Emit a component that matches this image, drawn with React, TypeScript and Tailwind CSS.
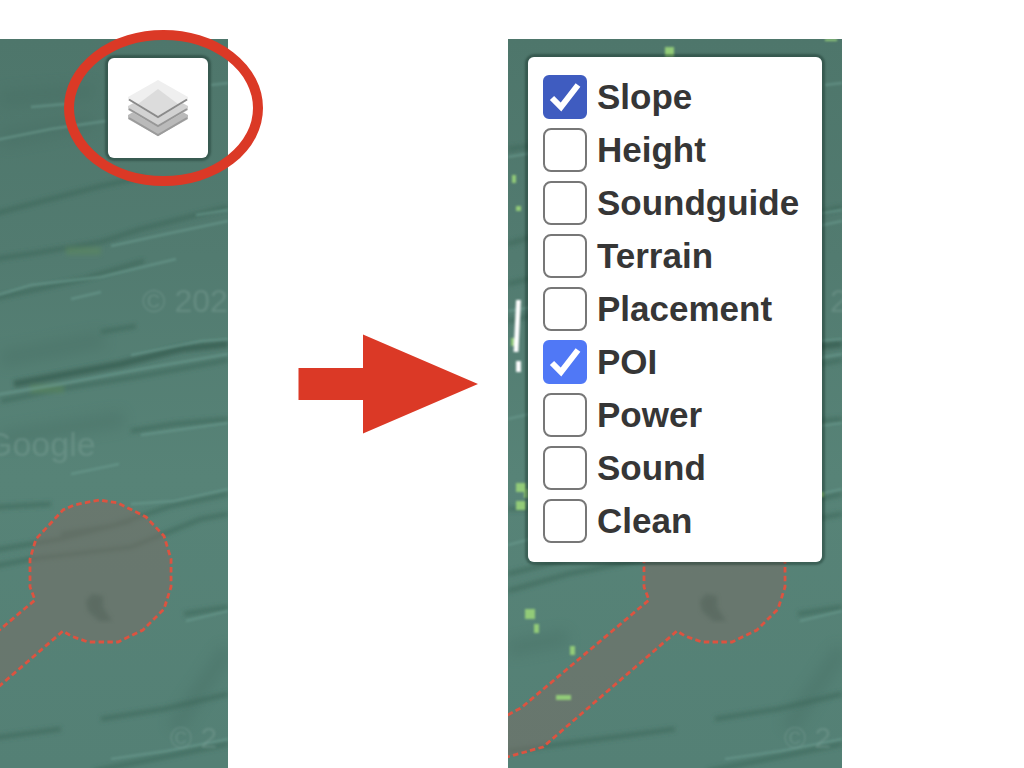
import React from 'react';

type Layer = { name: string; checked: boolean; fill: string };

const layers: Layer[] = [
  { name: 'Slope', checked: true, fill: 'checked:bg-[#3f5cc0] checked:border-[#3f5cc0]' },
  { name: 'Height', checked: false, fill: 'checked:bg-[#5078f6] checked:border-[#5078f6]' },
  { name: 'Soundguide', checked: false, fill: 'checked:bg-[#5078f6] checked:border-[#5078f6]' },
  { name: 'Terrain', checked: false, fill: 'checked:bg-[#5078f6] checked:border-[#5078f6]' },
  { name: 'Placement', checked: false, fill: 'checked:bg-[#5078f6] checked:border-[#5078f6]' },
  { name: 'POI', checked: true, fill: 'checked:bg-[#5078f6] checked:border-[#5078f6]' },
  { name: 'Power', checked: false, fill: 'checked:bg-[#5078f6] checked:border-[#5078f6]' },
  { name: 'Sound', checked: false, fill: 'checked:bg-[#5078f6] checked:border-[#5078f6]' },
  { name: 'Clean', checked: false, fill: 'checked:bg-[#5078f6] checked:border-[#5078f6]' },
];

const darkFurrows = [
  'M0 205 L107 173 L207 147 L250 138',
  'M0 245 L107 219 L142 214 L207 203 L247 190 L334 168',
  'M0 282 L107 258 L190 240 L250 222',
  'M207 293 L242 287',
  'M107 362 L167 350 L247 337 L334 321',
  'M0 110 L30 106',
  'M0 470 L107 468 L157 465',
  'M237 392 L280 385 L334 380',
  'M167 495 L217 487 L277 467 L334 455',
  'M0 535 L40 525 L107 510 L167 500 L237 482',
  'M0 552 L60 535 L137 520 L237 508 L307 480 L334 475',
  'M207 680 L270 670 L334 655',
  'M0 712 L107 698 L167 690',
  'M200 732 L280 716 L334 705',
  'M290 575 L334 568',
];

const broadShades = [
  'M107 60 L200 52',
  'M107 100 L200 82',
  'M107 320 L210 300',
  'M280 690 L334 610',
  'M0 610 L60 598',
  'M107 400 L230 380',
];

const lightFurrows = [
  'M137 68 L172 65',
  'M0 118 L107 100 L157 90 L212 82',
  'M317 46 L334 44',
  'M217 207 L272 195 L334 182',
  'M302 176 L334 171',
  'M0 272 L107 255 L137 246 L207 238 L282 220',
  'M177 260 L207 253',
  'M237 316 L307 302 L334 300',
  'M0 380 L107 355 L167 345 L247 330 L334 315',
  'M177 435 L225 425',
  'M247 396 L334 384',
  'M0 506 L60 490',
  'M237 465 L280 462 L334 450',
  'M292 582 L334 572',
  'M217 720 L272 712 L334 700',
];

const markers = [
  [157, 8, 9, 10], [4, 136, 4, 8], [8, 167, 5, 5], [3, 299, 4, 8],
  [8, 444, 10, 9], [16, 450, 4, 9], [8, 462, 10, 9], [312, 453, 4, 5],
  [17, 570, 10, 10], [26, 585, 5, 9], [62, 607, 5, 9], [48, 656, 15, 5], [317, 0, 12, 2],
];

function MapTerrain({ id, annotated = false }: { id: string; annotated?: boolean }) {
  return (
    <svg className="absolute top-0 right-0 h-[729px] w-[334px]" viewBox="0 0 334 729" aria-hidden="true">
      <defs>
        <linearGradient id={`${id}-ground`} x1="0" y1="0" x2="0" y2="1">
          <stop offset="0" stopColor="#4e766b" />
          <stop offset="0.3" stopColor="#527b70" />
          <stop offset="0.6" stopColor="#578377" />
          <stop offset="1" stopColor="#548075" />
        </linearGradient>
        <filter id={`${id}-broad`} x="-20%" y="-20%" width="140%" height="140%">
          <feGaussianBlur stdDeviation="7" />
        </filter>
        <filter id={`${id}-soft`} x="-10%" y="-10%" width="120%" height="120%">
          <feGaussianBlur stdDeviation="2" />
        </filter>
        <filter id={`${id}-edge`} x="-10%" y="-10%" width="120%" height="120%">
          <feGaussianBlur stdDeviation="0.9" />
        </filter>
        <filter id={`${id}-line`} x="-10%" y="-10%" width="120%" height="120%">
          <feGaussianBlur stdDeviation="0.5" />
        </filter>
      </defs>
      <rect width="334" height="729" fill={`url(#${id}-ground)`} />
      <g filter={`url(#${id}-broad)`} fill="none" stroke="#43695e" strokeWidth="16" opacity="0.3">
        {broadShades.map((d) => <path key={d} d={d} />)}
      </g>
      <g filter={`url(#${id}-soft)`} fill="none">
        <g stroke="#3c6458" strokeWidth="5" opacity="0.55">
          {darkFurrows.map((d) => <path key={d} d={d} />)}
        </g>
        <path d="M120 345 L227 325 L287 310 L334 305" stroke="#34594c" strokeWidth="7" opacity="0.7" />
        <path d="M172 212 H207 M137 350 H170" stroke="#5b8a5b" strokeWidth="8" opacity="0.5" />
      </g>
      <g filter={`url(#${id}-edge)`}>
        <g fill="none" stroke="#6b9b8f" strokeWidth="2.5" opacity="0.6">
          {lightFurrows.map((d) => <path key={d} d={d} />)}
        </g>
        <g fill="#8aaba3" opacity="0.3" fontFamily="Liberation Sans, Arial, sans-serif">
          {annotated ? (
            <text x="322" y="273" fontSize="32">2</text>
          ) : (
            <>
              <text x="92" y="417" fontSize="34">Google</text>
              <text x="248" y="273" fontSize="32">© 202</text>
            </>
          )}
          <text x="276" y="709" fontSize="30">© 2</text>
        </g>
      </g>
      <path
        d="M-8 680 L13 669 L141 561 L136 548 L136 520 L142 500 L169 471 L180 466 L205 461 L224 464 L252 478 L270 497 L277 520 L277 548 L270 570 L249 591 L224 603 L194 603 L177 597 L169 592 L35 708 L-8 720 Z"
        fill="#776d66"
        fillOpacity="0.55"
        stroke="#dc5340"
        strokeWidth="2.8"
        strokeDasharray="5.5 3.3"
        filter={`url(#${id}-line)`}
      />
      <path d="M192 562 L198 555 L209 557 L209 568 L218 582 L205 582 L194 572 Z" fill="#52645a" opacity="0.55" filter={`url(#${id}-soft)`} />
      {annotated && (
        <g filter={`url(#${id}-edge)`}>
          {markers.map(([x, y, w, h]) => (
            <rect key={`${x}-${y}`} x={x} y={y} width={w} height={h} fill="#92cb78" />
          ))}
          <path d="M10.5 261 L8 313 M10.5 322 V333" stroke="#fff" strokeWidth="4.8" />
        </g>
      )}
    </svg>
  );
}

function LayersIcon() {
  return (
    <svg className="h-[60px] w-[60px]" viewBox="0 0 60 60" aria-hidden="true">
      <path d="M0 37 L30 20 L60 37 V41 L30 58 L0 41 Z" fill="#bababa" />
      <path d="M1 40 L30 57 L59 40" fill="none" stroke="#9b9b9b" strokeWidth="2" />
      <path d="M0 28 L30 12 L60 28 V32 L30 49 L0 32 Z" fill="#d2d2d2" />
      <path d="M1 31 L30 48 L59 31" fill="none" stroke="#979797" strokeWidth="2" />
      <path d="M0 19 L30 2 L60 19 V22 L30 40 L0 22 Z" fill="#efefef" />
      <path d="M30 11 L50 26 L30 38 L10 26 Z" fill="#dcdcdc" />
      <path d="M1 21.5 L30 39 L59 21.5" fill="none" stroke="#8a8a8a" strokeWidth="2" />
    </svg>
  );
}

function LayerOption({ layer }: { layer: Layer }) {
  return (
    <label className="flex h-[53px] items-center gap-[10px]">
      <span className="relative size-11 shrink-0">
        <input
          type="checkbox"
          defaultChecked={layer.checked}
          className={`peer block size-11 appearance-none rounded-[8px] border-2 border-[#777777] bg-white checked:rounded-md ${layer.fill}`}
        />
        <svg className="pointer-events-none absolute inset-0 hidden size-11 peer-checked:block" viewBox="0 0 44 44" aria-hidden="true">
          <path d="M9 23 L18 32 L35 10" fill="none" stroke="#fff" strokeWidth="6" />
        </svg>
      </span>
      <span className="text-[35px] leading-[44px] font-bold text-[#363636]">{layer.name}</span>
    </label>
  );
}

export default function App() {
  return (
    <main className="grid min-h-screen grid-cols-[228fr_280fr_334fr_182fr] bg-white pt-[39px] font-['Liberation_Sans',Arial,sans-serif]">
      <section className="relative z-10 flex items-start justify-end bg-[#547f74] pt-[19px] pr-5" aria-label="Map">
        <div className="absolute inset-0 overflow-hidden">
          <MapTerrain id="plain" />
        </div>
        <div className="relative">
          <button
            type="button"
            aria-label="Layers"
            className="flex size-[100px] items-center justify-center rounded-md bg-white shadow-[0_0_2px_3px_rgba(20,45,38,0.4)]"
          >
            <LayersIcon />
          </button>
          <svg className="pointer-events-none absolute -top-7 -left-11 h-[156px] w-[199px] max-w-none" viewBox="0 0 199 156" aria-hidden="true">
            <ellipse cx="99.5" cy="78" rx="94.5" ry="73" fill="none" stroke="#db3926" strokeWidth="10" />
          </svg>
        </div>
      </section>

      <div className="pt-[295px] pl-[70px]">
        <svg className="h-[100px] w-[181px]" viewBox="0 0 181 100" aria-hidden="true">
          <path d="M0.5 34 H65 V0.5 L180 50 L65 99.5 V66 H0.5 Z" fill="#db3926" />
        </svg>
      </div>

      <section className="relative bg-[#547f74] px-5 pt-[18px]" aria-label="Map with layer list">
        <div className="absolute inset-0 overflow-hidden">
          <MapTerrain id="annotated" annotated />
        </div>
        <fieldset className="relative min-w-0 rounded-md bg-white pt-[13px] pb-[15px] pl-[15px] shadow-[0_0_2px_3px_rgba(20,45,38,0.4)]" aria-label="Layers">
          {layers.map((layer) => (
            <LayerOption key={layer.name} layer={layer} />
          ))}
        </fieldset>
      </section>
    </main>
  );
}
